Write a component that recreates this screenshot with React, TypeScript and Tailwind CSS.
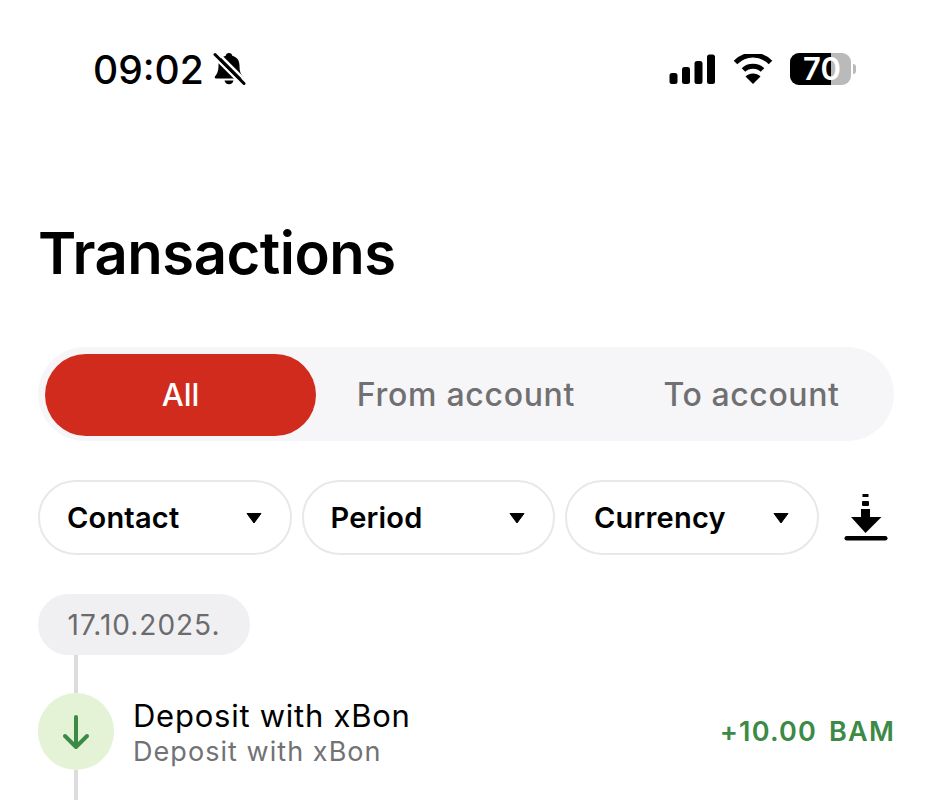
import React from "react";

function Chevron() {
  return (
    <svg width="16" height="12" viewBox="0 0 16 12" className="shrink-0">
      <path d="M1 1.5 H15 L8 11 Z" fill="#000" stroke="#000" strokeWidth="1" strokeLinejoin="round" />
    </svg>
  );
}

function Filter({ label }: { label: string }) {
  return (
    <div className="flex h-[75px] w-[253.5px] shrink-0 items-center justify-between rounded-full border-2 border-[#e8e8e8] bg-white pl-[27px] pr-[28px]">
      <span className="text-[29px] font-semibold tracking-[0.2px] text-black">{label}</span>
      <Chevron />
    </div>
  );
}

export default function App() {
  return (
    <div
      className="h-[800px] w-[933px] overflow-hidden bg-white"
      style={{ fontFamily: "Inter, 'Liberation Sans', sans-serif" }}
    >
      <div className="flex h-[106px] items-center justify-between pl-[93px] pr-[77px] pt-[32px]">
        <div className="flex items-center gap-[8px]">
          <span className="text-[39px] font-[550] leading-none text-black">09:02</span>
          <svg width="34" height="34" viewBox="0 0 34 34">
            <path d="M17 1c-2 0-3 1.200-3.300 2.800C8 5.500 6.500 9.500 6.500 14c0 5-1.500 8-3.500 10.500-.7 1 0 2 1 2h26c1 0 1.700-1 1-2C28.500 22 27.500 19 27.500 14c0-4.500-1.500-8.500-7.200-10.200C20 2.200 19 1 17 1Z" fill="#000" />
            <path d="M12.500 28.500a4.600 4.600 0 0 0 9 0Z" fill="#000" />
            <path d="M0 3 L31 34" stroke="#fff" strokeWidth="2.500" />
            <path d="M5 0 L34 29" stroke="#fff" strokeWidth="2.500" />
            <path d="M3 2.500 L32 31.500" stroke="#000" strokeWidth="3" strokeLinecap="round" />
          </svg>
        </div>
        <div className="flex items-center gap-[17px]">
          <svg width="47" height="30" viewBox="0 0 47 30">
            <rect x="0.500" y="19" width="8" height="11" rx="2.500" fill="#000" />
            <rect x="13" y="13" width="8" height="17" rx="2.500" fill="#000" />
            <rect x="25.500" y="7" width="8" height="23" rx="2.500" fill="#000" />
            <rect x="38" y="0.500" width="8" height="29.500" rx="2.500" fill="#000" />
          </svg>
          <svg width="40" height="30" viewBox="0 0 40 30">
            <path d="M20 30 12.500 22.500C16.500 18.500 23.500 18.500 27.500 22.500Z" fill="#000" />
            <path d="M10.500 16c5-5 14-5 19 0" fill="none" stroke="#000" strokeWidth="5" />
            <path d="M2.500 8.500c10-10 25-10 35 0" fill="none" stroke="#000" strokeWidth="5" />
          </svg>
          <div className="flex items-center">
            <div className="relative h-[32px] w-[61px] rounded-[9px] bg-[#bababa]">
              <div className="h-full w-[41px] rounded-l-[9px] bg-black" />
              <span className="absolute left-[13px] top-0 text-[31px] font-semibold leading-[32px] text-white">70</span>
            </div>
            <div className="ml-[2px] h-[10px] w-[3px] rounded-r-full bg-[#bababa]" />
          </div>
        </div>
      </div>

      <h1 className="mt-[112px] pl-[38px] text-[58px] font-semibold leading-[70px] tracking-[-0.5px] text-black">
        Transactions
      </h1>

      <div className="ml-[38px] mt-[59px] flex h-[94px] w-[856px] items-center rounded-full bg-[#f6f6f8] px-[7px] pt-[1px]">
        <div className="flex h-[82px] w-[271px] items-center justify-center rounded-full bg-[#d02b1d] pt-[1px] text-[31px] font-medium text-white">
          All
        </div>
        <div className="flex h-[82px] w-[300px] items-center justify-center pt-[1px] text-[32px] font-medium tracking-[0.7px] text-[#707072]">
          From account
        </div>
        <div className="flex h-[82px] flex-1 items-center justify-center pt-[1px] text-[32px] font-medium tracking-[0.6px] text-[#707072]">
          To account
        </div>
      </div>

      <div className="ml-[38px] mt-[39px] flex items-center gap-[10px]">
        <Filter label="Contact" />
        <Filter label="Period" />
        <Filter label="Currency" />
        <svg width="44" height="50" viewBox="0 0 44 50" className="ml-[15px] shrink-0">
          <rect x="18.500" y="1" width="6" height="3" fill="#000" />
          <rect x="18" y="8" width="7" height="5" rx="1" fill="#000" />
          <path d="M17 16h9v8h11.500L21.500 40 7 24h10Z" fill="#000" />
          <rect x="0.500" y="43" width="43" height="4.500" rx="2.200" fill="#000" />
        </svg>
      </div>

      <div className="ml-[38px] mt-[39px] flex h-[61px] w-[212px] items-center justify-center rounded-full bg-[#f0f0f2] text-[28px] tracking-[1px] text-[#6b6b6e]">
        17.10.2025.
      </div>

      <div className="ml-[74px] h-[38px] w-[4px] bg-[#dcdcdc]" />

      <div className="ml-[38px] flex h-[77px] w-[856px] items-center">
        <div className="flex h-[77px] w-[76px] shrink-0 items-center justify-center rounded-full bg-[#e4f3d6]">
          <svg width="28" height="36" viewBox="0 0 28 36">
            <path d="M14 3V33M3 22L14 33L25 22" fill="none" stroke="#3b8a46" strokeWidth="4" strokeLinecap="round" strokeLinejoin="round" />
          </svg>
        </div>
        <div className="ml-[20px] flex flex-col pt-[1px]">
          <span className="-ml-[1px] text-[31px] leading-[38px] tracking-[0.75px] text-black">Deposit with xBon</span>
          <span className="mt-[1px] -ml-[1px] text-[27px] leading-[32px] tracking-[1.05px] text-[#727274]">Deposit with xBon</span>
        </div>
        <span className="ml-auto -mr-[1px] pt-[2px] text-[27px] font-semibold tracking-[1.2px] text-[#3b8a46] [word-spacing:4px]">+10.00 BAM</span>
      </div>

      <div className="ml-[74px] h-[30px] w-[4px] bg-[#dcdcdc]" />
    </div>
  );
}
